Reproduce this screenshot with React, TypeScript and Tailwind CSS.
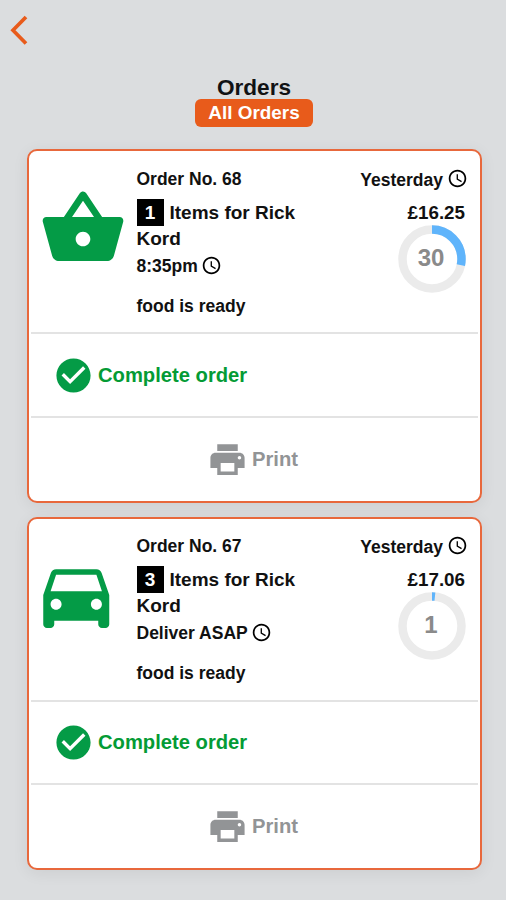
import { MdAccessTime, MdCheckCircle, MdDirectionsCar, MdPrint, MdShoppingBasket } from "react-icons/md";

type Order = {
  number: number;
  kind: "collect" | "deliver";
  items: number;
  due: string;
  price: string;
  minutes: number;
  share: number;
};

const orders: Order[] = [
  { number: 68, kind: "collect", items: 1, due: "8:35pm", price: "£16.25", minutes: 30, share: 0.3 },
  { number: 67, kind: "deliver", items: 3, due: "Deliver ASAP", price: "£17.06", minutes: 1, share: 0.01 },
];

function Dial({ minutes, share }: { minutes: number; share: number }) {
  const r = 29.5;
  const length = 2 * Math.PI * r;
  return (
    <div className="-mr-[1px] grid h-[68px] w-[68px] place-items-center">
      <svg viewBox="0 0 68 68" className="col-start-1 row-start-1 h-[68px] w-[68px] -rotate-90">
        <circle cx="34" cy="34" r={r} fill="none" stroke="#ebebeb" strokeWidth="8.5" />
        <circle
          cx="34"
          cy="34"
          r={r}
          fill="none"
          stroke="#5fb4fb"
          strokeWidth="8.5"
          strokeDasharray={`${length * Math.max(share * 0.945, 0.016)} ${length}`}
        />
      </svg>
      <span className="col-start-1 row-start-1 -mt-[2px] mr-[2px] text-[24px] leading-none text-[#8a8a8a]">{minutes}</span>
    </div>
  );
}

function OrderCard({ order }: { order: Order }) {
  const collect = order.kind === "collect";
  return (
    <article
      className={`flex flex-col rounded-[10px] border-2 border-[#e8683c] bg-white px-[2px] shadow-[0_3px_16px_rgba(0,0,0,0.07)] ${
        collect ? "h-[354px]" : "h-[353px]"
      }`}
    >
      <div className="flex h-[181px] shrink-0 pr-[13px] text-[17.5px] text-[#111]">
        <div className="w-[105.5px] shrink-0 text-[#049b46]">
          {collect ? (
            <MdShoppingBasket className="mt-[33px] ml-[8px] h-[88px] w-[88px]" />
          ) : (
            <MdDirectionsCar className="mt-[32px] ml-[1px] h-[88px] w-[88.5px]" />
          )}
        </div>
        <div className={collect ? "flex-1 pt-[14px]" : "flex-1 pt-[13px]"}>
          <div className="h-[28px] leading-[28px]">Order No. {order.number}</div>
          <div className="mt-[6px] flex h-[27px] gap-[6px] text-[19px] leading-[27px]">
            <span className="h-[27px] w-[27px] bg-black text-center text-white">{order.items}</span>
            <span className="whitespace-nowrap">Items for Rick</span>
          </div>
          <div className="h-[26px] text-[19px] leading-[26px]">Kord</div>
          <div className="flex h-[29px] items-center gap-[3.5px]">
            {order.due}
            <MdAccessTime className="mb-[2px] h-[21px] w-[21px] text-black" />
          </div>
          <div className="mt-[11px] h-[28px] leading-[28px]">food is ready</div>
        </div>
        <div className={collect ? "flex flex-col items-end pt-[14px]" : "flex flex-col items-end pt-[13px]"}>
          <div className="-mr-[3px] flex h-[30px] items-center gap-[4px]">
            Yesterday
            <MdAccessTime className="mb-[3px] h-[21px] w-[21px] text-black" />
          </div>
          <div className="mt-[4px] h-[26px] text-[18.8px] leading-[27px]">{order.price}</div>
          <Dial minutes={order.minutes} share={order.share} />
        </div>
      </div>
      <div
        className={`flex shrink-0 items-center gap-[4px] border-t-2 border-[#e3e3e3] pl-[22px] text-[20.2px] text-[#049b35] ${
          collect ? "h-[84px] pt-[1px]" : "h-[83px]"
        }`}
      >
        <MdCheckCircle className="h-[41px] w-[41px] text-[#049b46]" />
        Complete order
      </div>
      <div className="flex flex-1 items-center justify-center gap-[4px] border-t-2 border-[#e3e3e3] pr-[4px] text-[20.2px] text-[#929496]">
        <MdPrint className="h-[41px] w-[41px]" />
        Print
      </div>
    </article>
  );
}

export default function App() {
  return (
    <main className="flex h-[900px] w-[506px] flex-col overflow-hidden bg-[#dbdddf] font-['Liberation_Sans',Arial,sans-serif] font-bold">
      <header className="flex h-[149px] shrink-0 flex-col">
        <svg viewBox="0 0 18 30" className="mt-[15px] ml-[10px] h-[30px] w-[18px]">
          <path d="M16 2 3 15.3 16 28.5" fill="none" stroke="#e85b1b" strokeWidth="3.7" />
        </svg>
        <div className="mt-[30px] flex flex-col items-center pl-[2px]">
          <h1 className="h-[24px] text-[22.6px] leading-[26px] text-[#111214]">Orders</h1>
          <button className="h-[28px] w-[118px] rounded-[6px] bg-[#e85b1b] text-[18.9px] leading-[28px] text-white">
            All Orders
          </button>
        </div>
      </header>
      <section className="flex flex-col gap-[14px] pr-[24px] pl-[27px]">
        {orders.map((order) => (
          <OrderCard key={order.number} order={order} />
        ))}
      </section>
    </main>
  );
}
